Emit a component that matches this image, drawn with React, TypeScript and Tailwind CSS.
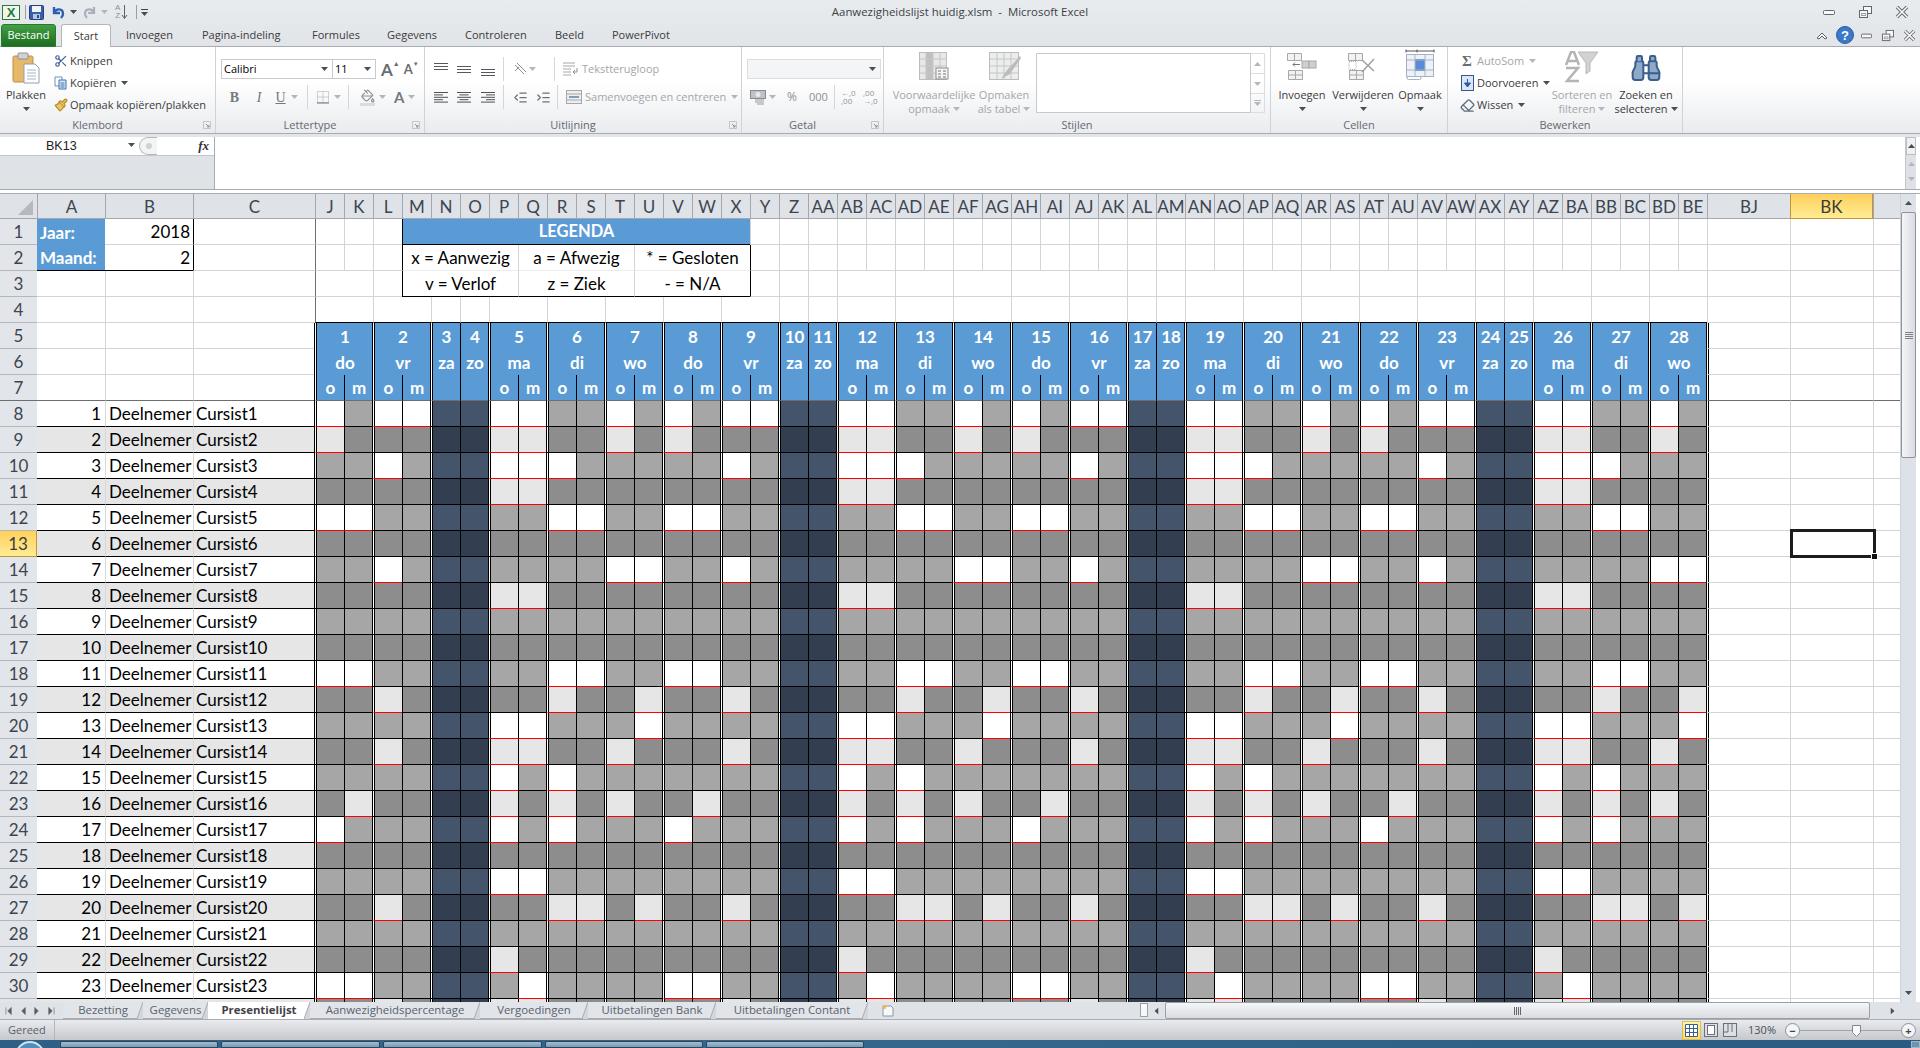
import React from "react";
import { Scissors, Paintbrush, IndentDecrease, IndentIncrease, PaintBucket, Binoculars, Eraser } from "lucide-react";

const cal = "font-['Lato',sans-serif]";

const LETTERS = (() => {
  const out: string[] = [];
  for (const c of "JKLMNOPQRSTUVWXYZ") out.push(c);
  for (const c of "ABCDEFGHIJKLMNOPQRSTUVWXYZ") out.push("A" + c);
  for (const c of "ABCDE") out.push("B" + c);
  return out;
})();

type Day = { n: number; wd: string; start: number; span: number; kind: number };
const DAYS: Day[] = (() => {
  const names = ["do", "vr", "za", "zo", "ma", "di", "wo"];
  const kinds = [0, 1, -1, -2, 2, 3, 4];
  const out: Day[] = [];
  let start = 0;
  for (let i = 0; i < 28; i++) {
    const k = i % 7;
    const span = kinds[k] < 0 ? 1 : 2;
    out.push({ n: i + 1, wd: names[k], start, span, kind: kinds[k] });
    start += span;
  }
  return out;
})();

const G = "gg gg gg gg gg";
const PATTERN = [
  "Lg LL LL gg Lg", "Lg gg LL gg Lg", "gg Lg LL Lg gg", "gg gg LL gg gg", "LL gg gg LL gg", G,
  "gg Lg gg gg LL", "gg gg LL gg gg", G, G, "LL gg gg LL gg", "gg Lg gg Lg gL",
  "gg gg LL gg gL", "gg Lg LL gg Lg", "gg gg Lg Lg gg", "gL gg Lg Lg Lg", "Lg gg Lg Lg gg", G,
  "gg gg LL gg gg", "gg Lg gg LL gL", G, "gg gg Lg gg gg", "LL gg gL gg gg", "gg Lg LL gg gg",
].map((r) => r.split(" "));

const DOUBLE = "-ml-px border-l-[3px] border-double border-l-black bg-clip-padding";
const GL = "border-b border-[#d4d4d4]";
const GLL = "border-l border-[#d4d4d4]";

function Caret({ g = false, className = "" }: { g?: boolean; className?: string }) {
  return (
    <svg width="7" height="4" viewBox="0 0 7 4" className={"shrink-0 " + className}>
      <path d="M0 0h7L3.5 4z" fill={g ? "#b4b6ba" : "#4a4d52"} />
    </svg>
  );
}

function Sep({ h = 24 }: { h?: number }) {
  return <div className="w-px bg-[#d4d6da] shrink-0" style={{ height: h }} />;
}

function LaunchIcon() {
  return (
    <svg width="8" height="8" viewBox="0 0 8 8" className="shrink-0">
      <path d="M0.5 0.5h7v7h-7z" fill="none" stroke="#c3c5c9" />
      <path d="M3 3l3 3M6 4v2H4" fill="none" stroke="#8b8e93" />
    </svg>
  );
}

function Lines({ kind }: { kind: "l" | "c" | "r" }) {
  const ws = [14, 9, 14, 9, 14];
  return (
    <svg width="14" height="13" viewBox="0 0 14 13" className="shrink-0">
      {ws.map((w, i) => (
        <rect key={i} x={kind === "l" ? 0 : kind === "c" ? (14 - w) / 2 : 14 - w} y={1 + i * 2.4} width={w} height="1" fill="#4f5258" />
      ))}
    </svg>
  );
}

function VLines({ pos }: { pos: "t" | "m" | "b" }) {
  const y0 = pos === "t" ? 0 : pos === "m" ? 3 : 6;
  return (
    <svg width="14" height="13" viewBox="0 0 14 13" className="shrink-0">
      {[0, 3, 6].map((d) => (
        <rect key={d} x="0" y={y0 + d} width="14" height="1" fill="#55585e" />
      ))}
    </svg>
  );
}

function GridIcon({ w = 30, h = 28, accent }: { w?: number; h?: number; accent?: string }) {
  return (
    <svg width={w} height={h} viewBox="0 0 30 28" className="shrink-0">
      <rect x="0.5" y="0.5" width="29" height="27" fill="#eceded" stroke="#bdbdbd" />
      {accent && <rect x="8" y="1" width="7" height="26" fill={accent} />}
      <path d="M8 1v26M15 1v26M22 1v26M1 7h28M1 14h28M1 21h28" stroke="#c6c6c6" />
    </svg>
  );
}

function Big({ icon, l1, l2, dis, caret = true, w }: { icon: React.ReactNode; l1: string; l2?: string; dis?: boolean; caret?: boolean; w: number }) {
  return (
    <div className={"flex flex-col items-center shrink-0 " + (dis ? "text-[#a4a6aa]" : "text-[#3b3b3b]")} style={{ width: w }}>
      <div className="h-[41px] pt-[5px] flex items-start justify-center">{icon}</div>
      <div className="h-[14px] leading-[14px] whitespace-nowrap">{l1}</div>
      {l2 ? (
        <div className="h-[14px] leading-[14px] whitespace-nowrap flex items-center gap-[3px]">
          {l2}
          {caret && <Caret g={dis} />}
        </div>
      ) : (
        caret && (
          <div className="h-[13px] flex items-center">
            <Caret g={dis} />
          </div>
        )
      )}
    </div>
  );
}

function Group({ w, label, launch, children }: { w: number; label: string; launch?: boolean; children: React.ReactNode }) {
  return (
    <div className="h-full border-r border-[#d0d2d6] flex flex-col shrink-0" style={{ width: w }}>
      <div className="h-[70px] flex">{children}</div>
      <div className={"h-[16px] relative flex items-center justify-center text-[#66696f] " + (launch ? "pr-[20px]" : "")}>
        {label}
        {launch && (
          <span className="absolute right-[4px] top-[4px]">
            <LaunchIcon />
          </span>
        )}
      </div>
    </div>
  );
}

function SmallRow({ icon, text, dis, caret, tw = 14 }: { icon: React.ReactNode; text: string; dis?: boolean; caret?: boolean; tw?: number }) {
  return (
    <div className={"h-[22px] flex items-center " + (dis ? "text-[#a4a6aa]" : "text-[#3b3b3b]")}>
      <span className="flex items-center justify-center shrink-0" style={{ width: tw + 5 }}>
        {icon}
      </span>
      <span className="whitespace-nowrap">{text}</span>
      {caret && <Caret g={dis} className="ml-[5px]" />}
    </div>
  );
}

function Ribbon() {
  return (
    <div className="h-[87px] shrink-0 flex border-b border-[#a9abb0] bg-gradient-to-b from-white from-40% to-[#e9ebee]">
      <Group w={216} label="Klembord" launch>
        <div className="w-[52px] shrink-0">
          <Big
            w={52}
            l1="Plakken"
            icon={
              <svg width="28" height="32" viewBox="0 0 28 32">
                <rect x="1" y="4" width="20" height="26" rx="1.5" fill="#e7b869" stroke="#b98d48" />
                <rect x="6" y="1" width="10" height="6" rx="1" fill="#cfd2d6" stroke="#8e9094" />
                <path d="M12 12h11l4 4v15H12z" fill="#fff" stroke="#8e9fb5" />
                <path d="M15 18h9M15 21h9M15 24h9M15 27h9" stroke="#a7b3c3" />
              </svg>
            }
          />
        </div>
        <div className="pt-[3px] -ml-px">
          <SmallRow icon={<Scissors size={14} color="#3c5f95" />} text="Knippen" />
          <SmallRow
            tw={14}
            caret
            icon={
              <svg width="14" height="14" viewBox="0 0 14 14">
                <path d="M1 1h7v9H1z" fill="#fff" stroke="#6f8fb8" />
                <path d="M5 4h7v9H5z" fill="#dbe7f6" stroke="#3f6fae" />
                <path d="M6.5 7h4M6.5 9h4M6.5 11h4" stroke="#3f6fae" />
              </svg>
            }
            text="Kopiëren"
          />
          <SmallRow icon={<Paintbrush size={14} color="#b98a2e" fill="#e8c560" />} text="Opmaak kopiëren/plakken" />
        </div>
      </Group>

      <Group w={209} label="Lettertype" launch>
        <div className="pl-[5px] pt-[12px]">
          <div className="flex items-center h-[20px]">
            <div className="w-[112px] h-[20px] border border-[#c8cacd] bg-white flex items-center justify-between pl-[2px] pr-[4px] text-black">
              Calibri
              <Caret />
            </div>
            <div className="w-[43px] h-[20px] border border-l-0 border-[#c8cacd] bg-white flex items-center justify-between pl-[2px] pr-[4px] text-black">
              11
              <Caret />
            </div>
            <span className={cal + " ml-[5px] text-[17px] font-bold text-[#6a6d72] leading-none"}>A</span>
            <span className="text-[7px] text-[#6a6d72] mb-[10px]">▲</span>
            <span className={cal + " ml-[4px] text-[13px] font-bold text-[#6a6d72] leading-none"}>A</span>
            <span className="text-[6px] text-[#6a6d72] mb-[10px]">▼</span>
          </div>
          <div className="flex items-center h-[20px] mt-[8px] text-[#75787d]">
            <span className="w-[27px] text-center font-['Liberation_Serif',serif] font-bold text-[14px]">B</span>
            <span className="w-[22px] text-center font-['Liberation_Serif',serif] italic text-[14px]">I</span>
            <span className="w-[21px] text-center font-['Liberation_Serif',serif] underline text-[14px]">U</span>
            <Caret g className="mr-[9px]" />
            <Sep />
            <span className="ml-[8px] mr-[4px]">
              <svg width="14" height="14" viewBox="0 0 14 14">
                <path d="M1.5 1.5h11v11h-11zM7 1.5v11M1.5 7h11" fill="none" stroke="#a7a9ad" strokeDasharray="1 1" />
                <path d="M1 13h12" stroke="#70737a" />
              </svg>
            </span>
            <Caret g className="mr-[7px]" />
            <Sep />
            <span className="ml-[11px] mr-[4px] flex flex-col items-center">
              <PaintBucket size={14} color="#8c8f94" />
              <span className="w-[15px] h-[3px] bg-[#dcdcdc]" />
            </span>
            <Caret g className="mr-[8px]" />
            <span className={cal + " font-bold text-[15px] mr-[4px]"}>A</span>
            <Caret g />
          </div>
        </div>
      </Group>

      <Group w={317} label="Uitlijning" launch>
        <div className="pl-[9px] pt-[12px] text-[#a4a6aa]">
          <div className="h-[20px] flex items-center">
            <span className="w-[23px]"><VLines pos="t" /></span>
            <span className="w-[24px]"><VLines pos="m" /></span>
            <span className="w-[22px]"><VLines pos="b" /></span>
            <Sep />
            <span className="ml-[9px] w-[14px] text-[#9ea0a4]">
              <svg width="14" height="14" viewBox="0 0 14 14">
                <path d="M2 3l9 9M4 1l9 9M6 5l-4 4" stroke="#8d9095" fill="none" />
              </svg>
            </span>
            <Caret g className="ml-[2px] mr-[18px]" />
            <Sep />
            <span className="ml-[8px] w-[18px]">
              <svg width="16" height="14" viewBox="0 0 16 14">
                <path d="M0 1h12M0 4h12M0 7h8M0 10h8M0 13h8" stroke="#a6a8ac" />
                <path d="M11 10h3V6M12 8l-2 2 2 2" stroke="#8d9095" fill="none" />
              </svg>
            </span>
            <span className="ml-[1px] whitespace-nowrap">Tekstterugloop</span>
          </div>
          <div className="h-[20px] mt-[8px] flex items-center">
            <span className="w-[23px]"><Lines kind="l" /></span>
            <span className="w-[24px]"><Lines kind="c" /></span>
            <span className="w-[22px]"><Lines kind="r" /></span>
            <Sep />
            <span className="ml-[9px] w-[23px]"><IndentDecrease size={15} color="#6e7176" /></span>
            <span className="w-[21px]"><IndentIncrease size={15} color="#6e7176" /></span>
            <Sep />
            <span className="ml-[8px] w-[18px]">
              <svg width="16" height="14" viewBox="0 0 16 14">
                <rect x="0.5" y="0.5" width="15" height="13" fill="#eee" stroke="#a6a8ac" />
                <path d="M0 4h16M0 10h16" stroke="#a6a8ac" />
                <path d="M3 7h10" stroke="#5f7fa8" strokeWidth="1.5" />
              </svg>
            </span>
            <span className="ml-[1px] whitespace-nowrap">Samenvoegen en centreren</span>
            <Caret g className="ml-[5px]" />
          </div>
        </div>
      </Group>

      <Group w={142} label="Getal" launch>
        <div className="pl-[5px] pt-[12px] text-[#8f9196]">
          <div className="w-[134px] h-[20px] border border-[#dcdde0] bg-[#f4f5f6] flex items-center justify-end pr-[4px]">
            <Caret />
          </div>
          <div className="h-[20px] mt-[8px] flex items-center">
            <span className="w-[19px] ml-[3px]">
              <svg width="16" height="16" viewBox="0 0 16 16">
                <rect x="0.5" y="1.5" width="15" height="8" fill="#bfc1c4" stroke="#888b90" />
                <circle cx="8" cy="5.5" r="2.5" fill="#e8e9ea" />
                <path d="M5 11h9M5 13h9M7 15h7" stroke="#97999d" />
              </svg>
            </span>
            <Caret g className="mr-[11px]" />
            <span className="w-[22px] text-[12px]">%</span>
            <span className="w-[25px] text-[11px]">000</span>
            <Sep />
            <span className="ml-[6px] w-[22px] text-[8px] leading-[8px] whitespace-pre">{"←,0\n,00"}</span>
            <span className="text-[8px] leading-[8px] whitespace-pre">{",00\n→,0"}</span>
          </div>
        </div>
      </Group>

      <Group w={387} label="Stijlen">
        <div className="w-[14px] shrink-0" />
        <Big
          dis
          w={72}
          l1="Voorwaardelijke"
          l2="opmaak"
          icon={
            <svg width="30" height="28" viewBox="0 0 30 28">
              <rect x="0.5" y="0.5" width="27" height="27" fill="#e8e8e8" stroke="#bdbdbd" />
              <rect x="7" y="1" width="7" height="26" fill="#c0c0c0" />
              <path d="M7 1v26M14 1v26M21 1v26M1 7h27M1 14h27M1 21h27" stroke="#c6c6c6" />
              <rect x="17" y="16" width="12" height="11" fill="#f5f5f5" stroke="#8d8d8d" />
              <path d="M19 19h3M19 22h3M19 25h3M24 19h3M24 22h3M24 25h3" stroke="#777" />
            </svg>
          }
        />
        <div className="w-[1px]" />
        <Big
          dis
          w={66}
          l1="Opmaken"
          l2="als tabel"
          icon={
            <span className="relative block">
              <GridIcon />
              <svg width="24" height="26" viewBox="0 0 24 26" className="absolute right-[-3px] bottom-0">
                <path d="M22 2L9 16l-6 9 9-5L23 4z" fill="#bcbcbc" />
              </svg>
            </span>
          }
        />
        <div className="pt-[6px] ml-[-1px] flex">
          <div className="w-[215px] h-[60px] bg-white border border-[#c8cacd]" />
          <div className="w-[14px] h-[60px] flex flex-col border border-l-0 border-[#dcdde0]">
            <div className="h-[20px] border-b border-[#dcdde0] flex items-center justify-center">
              <Caret g className="rotate-180" />
            </div>
            <div className="h-[20px] border-b border-[#dcdde0] flex items-center justify-center">
              <Caret g />
            </div>
            <div className="h-[18px] flex flex-col items-center justify-center gap-[1px]">
              <span className="w-[7px] h-px bg-[#b4b6ba]" />
              <Caret g />
            </div>
          </div>
        </div>
      </Group>

      <Group w={177} label="Cellen">
        <div className="w-[7px] shrink-0" />
        <Big
          w={48}
          l1="Invoegen"
          icon={
            <svg width="30" height="28" viewBox="0 0 30 28">
              <path d="M0.5 1.5h14v7h-14zM7.5 1.5v7M1.5 18.5h14v9h-14zM8.5 18.5v9M1.5 23h14" fill="#f2f2f2" stroke="#a8a8a8" />
              <rect x="15" y="9" width="7" height="7" fill="#cfcfcf" stroke="#a8a8a8" />
              <rect x="22" y="9" width="7" height="7" fill="#cfcfcf" stroke="#a8a8a8" />
              <path d="M13 12.5H6m2-2l-2 2 2 2" stroke="#777" fill="none" />
            </svg>
          }
        />
        <div className="w-[5px]" />
        <Big
          w={64}
          l1="Verwijderen"
          icon={
            <svg width="30" height="28" viewBox="0 0 30 28">
              <path d="M0.5 1.5h14v7h-14zM7.5 1.5v7M1.5 18.5h14v9h-14zM8.5 18.5v9M1.5 23h14" fill="#f2f2f2" stroke="#a8a8a8" />
              <path d="M1 9.5h7v8H1z" fill="none" stroke="#a8a8a8" strokeDasharray="1 1" />
              <path d="M14 8l12 11M26 7L14 20" stroke="#a0a0a0" strokeWidth="1.5" />
            </svg>
          }
        />
        <div className="w-[3px]" />
        <Big
          w={44}
          l1="Opmaak"
          icon={
            <svg width="30" height="32" viewBox="0 0 30 32" className="-mt-[3px]">
              <path d="M1 2h28M1 0.5v3M29 0.5v3M12 0.5v3" stroke="#555" />
              <rect x="1.5" y="5.5" width="27" height="22" fill="#eef2f8" stroke="#a6b2c4" />
              <rect x="10" y="10" width="10" height="12" fill="#5b8bd8" />
              <path d="M10 6v21M20 6v21M2 11h26M2 21h26" stroke="#a6b2c4" />
              <rect x="2" y="27.5" width="14" height="3" rx="1.5" fill="none" stroke="#a6b2c4" />
            </svg>
          }
        />
      </Group>

      <Group w={235} label="Bewerken">
        <div className="pt-[3px] pl-[9px] w-[103px] shrink-0">
          <SmallRow dis caret tw={15} icon={<span className="font-['Liberation_Serif',serif] font-bold text-[15px] text-[#6a6d72] leading-none">Σ</span>} text="AutoSom" />
          <SmallRow
            caret
            tw={15}
            icon={
              <svg width="13" height="16" viewBox="0 0 13 16">
                <rect x="0.5" y="0.5" width="12" height="15" fill="#d9e6f7" stroke="#36588f" />
                <path d="M6.5 4v7M3.5 8l3 4 3-4z" stroke="#2a5ab0" fill="#2a5ab0" />
              </svg>
            }
            text="Doorvoeren"
          />
          <SmallRow caret tw={15} icon={<Eraser size={15} color="#5f6b7c" />} text="Wissen" />
        </div>
        <Big
          dis
          w={62}
          l1="Sorteren en"
          l2="filteren"
          icon={
            <svg width="36" height="32" viewBox="0 0 36 32" className="-mt-px">
              <path d="M14 1h20l-8 11v8l-4 3V12z" fill="#d2d2d2" stroke="#b9b9b9" />
              <path d="M2 14L7 1h3l5 13M4 10h9M2 17h12L3 30h12" fill="none" stroke="#b4b4b4" strokeWidth="2.5" />
            </svg>
          }
        />
        <Big
          w={66}
          l1="Zoeken en"
          l2="selecteren"
          icon={<Binoculars size={32} color="#3b5e8c" fill="#8fa9c9" strokeWidth={1.5} />}
        />
      </Group>
      <div className="flex-1" />
    </div>
  );
}

const TABS: [string, number][] = [
  ["Invoegen", 76],
  ["Pagina-indeling", 110],
  ["Formules", 75],
  ["Gegevens", 78],
  ["Controleren", 90],
  ["Beeld", 57],
  ["PowerPivot", 85],
];

function Title() {
  return (
    <div className="h-[24px] shrink-0 flex items-center relative">
      <div className="w-[18px] h-[15px] ml-[2px] border border-[#2b7a3a] bg-[#f2f5ee] flex items-center justify-center font-bold text-[#1f7a33] text-[13px] leading-none font-['Liberation_Sans',sans-serif]">X</div>
      <div className="w-px h-[14px] bg-[#9a9da2] ml-[5px]" />
      <svg width="15" height="15" viewBox="0 0 15 15" className="ml-[3px]">
        <rect x="0.5" y="0.5" width="14" height="14" rx="1" fill="#3a5fa8" stroke="#23407c" />
        <rect x="3" y="1" width="9" height="6" fill="#f1f4f8" />
        <rect x="4" y="9" width="7" height="5" fill="#b4c5de" />
        <rect x="8" y="10" width="2" height="3" fill="#2b4a86" />
      </svg>
      <svg width="14" height="15" viewBox="0 0 14 15" className="ml-[7px]">
        <path d="M3 2v6h6M3 8c2-5 9-5 9 1 0 2-1 3-2 4" fill="none" stroke="#2d5fb0" strokeWidth="2.4" />
      </svg>
      <Caret className="ml-[5px]" />
      <svg width="13" height="15" viewBox="0 0 13 15" className="ml-[6px]">
        <path d="M11 2v6H5M11 8C9 3 2 3 2 9c0 2 1 3 2 4" fill="none" stroke="#a9b0ba" strokeWidth="2.2" />
      </svg>
      <Caret g className="ml-[5px]" />
      <div className="ml-[7px] flex items-center">
        <div className="text-[8px] leading-[8px] text-[#8d9096] font-['Liberation_Sans',sans-serif] flex flex-col items-center">
          <span>A</span>
          <span>Z</span>
        </div>
        <svg width="7" height="16" viewBox="0 0 7 16" className="ml-px">
          <path d="M3.5 1v13M1 11l2.5 3.5L6 11" stroke="#5c6068" fill="none" />
        </svg>
      </div>
      <div className="w-px h-[14px] bg-[#9a9da2] ml-[8px]" />
      <div className="ml-[4px] flex flex-col items-center gap-[2px]">
        <span className="w-[7px] h-px bg-[#444]" />
        <Caret />
      </div>
      <div className="absolute left-0 right-0 top-0 h-full flex items-center justify-center text-[#3b3f46] pointer-events-none text-[11.4px]">
        Aanwezigheidslijst huidig.xlsm&nbsp; -&nbsp; Microsoft Excel
      </div>
      <div className="ml-auto flex items-center pr-[11px]">
        <WinBtn size={14} gap={23} />
      </div>
    </div>
  );
}

function WinBtn({ size, gap }: { size: number; gap: number }) {
  return (
    <div className="flex items-center" style={{ gap }}>
      <svg width={size - 2} height={size} viewBox="0 0 12 14">
        <rect x="0.5" y="5.5" width="11" height="4" rx="1" fill="#f8f8f8" stroke="#62666d" />
      </svg>
      <svg width={size} height={size} viewBox="0 0 14 14">
        <rect x="5.5" y="1.5" width="8" height="7" fill="#f8f8f8" stroke="#62666d" />
        <rect x="1.5" y="5.5" width="8" height="7" fill="#f8f8f8" stroke="#62666d" />
        <rect x="3.5" y="8.5" width="4" height="2" fill="none" stroke="#9ba0a7" />
      </svg>
      <svg width={size} height={size} viewBox="0 0 14 14">
        <path d="M2 2l10 10M12 2L2 12" stroke="#62666d" strokeWidth="3.4" />
        <path d="M2 2l10 10M12 2L2 12" stroke="#f8f8f8" strokeWidth="1.6" />
      </svg>
    </div>
  );
}

function Tabs() {
  return (
    <div className="h-[23px] shrink-0 flex items-end relative border-b border-[#a9abb0]">
      <div className="ml-px w-[55px] h-[23px] -mb-px rounded-t-[3px] bg-gradient-to-b from-[#42a044] to-[#1c6e20] border border-[#277a2b] text-white flex items-center justify-center">
        Bestand
      </div>
      <div className="ml-[5px] w-[50px] h-[23px] -mb-px bg-white border border-b-0 border-[#b4b6ba] rounded-t-[3px] flex items-center justify-center text-[#3b3b3b]">
        Start
      </div>
      {TABS.map(([t, w], i) => (
        <div key={t} className="h-[22px] flex items-center text-[#3b3b3b] whitespace-nowrap" style={{ width: w, marginLeft: i === 0 ? 15 : 0 }}>
          {t}
        </div>
      ))}
      <div className="ml-auto mr-[4px] h-[22px] flex items-center">
        <svg width="14" height="12" viewBox="0 0 14 12" className="mr-[7px]">
          <path d="M2 9l5-5 5 5-2 1-3-3-3 3z" fill="#fff" stroke="#5b5e64" />
        </svg>
        <svg width="18" height="18" viewBox="0 0 18 18">
          <circle cx="9" cy="9" r="8.5" fill="#3c78c9" stroke="#2a5da6" />
          <text x="9" y="13.5" textAnchor="middle" fontSize="13" fontWeight="700" fill="#fff" fontFamily="Liberation Sans">?</text>
        </svg>
        <div className="ml-[7px]">
          <WinBtn size={13} gap={9} />
        </div>
      </div>
    </div>
  );
}

function FormulaBar() {
  return (
    <div className="h-[52px] shrink-0 flex bg-white">
      <div className="w-[215px] shrink-0 flex flex-col border-r border-[#a9abb0]">
        <div className="h-[18px] flex items-center bg-white">
          <div className="w-[139px] flex items-center pl-[46px] relative font-['Liberation_Sans',sans-serif] text-[#222] text-[12.5px]">
            BK13
            <Caret className="absolute right-[4px] top-[6px]" />
          </div>
          <div className="w-[18px] h-[18px] rounded-l-full border border-r-0 border-[#b4b6ba] flex items-center justify-center bg-[#f3f4f6]">
            <span className="w-[6px] h-[6px] rounded-full bg-[#cfd1d5]" />
          </div>
          <span className="ml-auto mr-[5px] font-['Liberation_Serif',serif] italic font-bold text-[13px] text-[#333]">fx</span>
        </div>
        <div className="flex-1 bg-[#dfe2e6] border-t border-[#c4c6ca]" />
      </div>
      <div className="flex-1" />
      <div className="w-[11px] shrink-0 ml-auto flex flex-col items-center bg-[#dee1e6] border-l border-[#c4c6ca] mr-[4px]">
        <div className="h-[18px] w-full bg-[#eef0f2] border border-[#bcbfc4] flex items-center justify-center">
          <Caret className="rotate-180" />
        </div>
        <div className="h-[17px] flex items-center"><Caret g className="rotate-180" /></div>
        <div className="h-[14px] flex items-center"><Caret g /></div>
      </div>
    </div>
  );
}

function Header({ children, sel }: { children?: React.ReactNode; sel?: boolean }) {
  return (
    <div
      className={
        "flex items-center justify-center text-[17px] leading-none " +
        cal +
        (sel
          ? " bg-gradient-to-b from-[#ffd05a] to-[#ffec93] border-x border-b border-[#c2953a] text-[#3c3c3c]"
          : " bg-[#dfe2e7] border-l border-b border-[#a4a8ae] text-[#3e4550]")
      }
    >
      {children}
    </div>
  );
}

function RowHead({ n, last7, sel }: { n: number; last7?: boolean; sel?: boolean }) {
  return (
    <div
      className={
        "flex items-center justify-center text-[17px] leading-none " +
        cal +
        (sel
          ? " bg-gradient-to-b from-[#ffd05a] to-[#ffec93] border-b border-r border-[#c2953a] text-[#3c3c3c]"
          : " bg-[#e2e5e9] border-b border-[#b4b7bc] text-[#3e4550]") +
        (last7 ? " !border-b-[#6e6e6e]" : "")
      }
    >
      {n === 31 ? null : n}
    </div>
  );
}

function Trail({ row, dark }: { row: number; dark?: boolean }) {
  const b = dark ? "border-b border-b-[#6e6e6e]" : GL;
  const kids = [48, 49, 50].map((c) => {
    const firstDbl = row >= 5 && c === 48;
    return (
      <div key={c} className={(firstDbl ? DOUBLE + " " : GLL + " ") + b + (row === 13 && c === 49 ? " relative" : "")}>
        {row === 13 && c === 49 && (
          <div className="absolute left-[-1px] top-[-2px] w-[86px] h-[29px] border-[3px] border-[#1c1c1c] z-10">
            <span className="absolute right-[-5px] bottom-[-5px] w-[7px] h-[7px] bg-[#111] border border-white" />
          </div>
        )}
      </div>
    );
  });
  return <>{kids}</>;
}

function Top() {
  const out: React.ReactNode[] = [];
  out.push(
    <div key="corner" className="bg-[#dfe2e7] border-b border-[#a4a8ae] flex items-end justify-end pr-[4px] pb-[3px]">
      <svg width="15" height="15" viewBox="0 0 15 15">
        <path d="M15 0v15H0z" fill="#b5b8bd" />
      </svg>
    </div>,
  );
  ["A", "B"].forEach((l) => out.push(<Header key={l}>{l}</Header>));
  out.push(<Header key="C">C</Header>);
  LETTERS.forEach((l, i) => out.push(<Header key={"h" + i}>{l}</Header>));
  out.push(<Header key="BJ">BJ</Header>);
  out.push(<Header key="BK" sel>BK</Header>);
  out.push(<Header key="BL" />);

  const lg = "bg-white border-b border-[#d4d4d4]";
  const gridCell = (k: string, i: number, extra = "") => (
    <div key={k} className={GL + " " + (i === 0 ? "border-l border-l-[#6e6e6e]" : GLL) + " " + extra} />
  );

  out.push(<RowHead key="r1" n={1} />);
  out.push(<div key="a1" className={cal + " text-[17px] font-bold text-white bg-[#5b9bd5] pl-[3px] flex items-center leading-none"}>Jaar:</div>);
  out.push(<div key="b1" className={cal + " text-[17px] text-black flex items-center justify-end pr-[3px] leading-none " + lg}>2018</div>);
  out.push(<div key="c1" className={GL + " border-l border-l-black"} />);
  for (let i = 0; i < 3; i++) out.push(gridCell("t1" + i, i));
  out.push(<div key="lg1" className={"col-span-12 bg-[#5b9bd5] border-l border-b border-black text-white font-bold text-[16.5px] leading-none flex items-center justify-center " + cal}>LEGENDA</div>);
  for (let i = 15; i < 48; i++) out.push(gridCell("t1" + i, i));
  out.push(<Trail key="tr1" row={1} />);

  out.push(<RowHead key="r2" n={2} />);
  out.push(<div key="a2" className={cal + " text-[17px] font-bold text-white bg-[#5b9bd5] pl-[3px] flex items-center leading-none border-b border-black"}>Maand:</div>);
  out.push(<div key="b2" className={cal + " text-[17px] text-black flex items-center justify-end pr-[3px] leading-none border-b border-black"}>2</div>);
  out.push(<div key="c2" className={GL + " border-l border-l-black"} />);
  for (let i = 0; i < 3; i++) out.push(gridCell("t2" + i, i));
  const legendCell = (k: string, t: string, first: boolean, last: boolean) => (
    <div
      key={k}
      className={
        "col-span-4 flex items-center justify-center text-[17px] leading-none text-black whitespace-nowrap " +
        cal +
        (first ? " border-l border-l-black" : " border-l border-l-[#d4d4d4]") +
        (last ? " border-b border-b-black" : " border-b border-b-[#ececec]")
      }
    >
      {t}
    </div>
  );
  out.push(legendCell("l21", "x = Aanwezig", true, false));
  out.push(legendCell("l22", "a = Afwezig", false, false));
  out.push(legendCell("l23", "* = Gesloten", false, false));
  for (let i = 15; i < 48; i++) out.push(gridCell("t2" + i, i, i === 15 ? "!border-l-black" : ""));
  out.push(<Trail key="tr2" row={2} />);

  out.push(<RowHead key="r3" n={3} />);
  out.push(<div key="a3" className={GL} />);
  out.push(<div key="b3" className={GL + " " + GLL} />);
  out.push(<div key="c3" className={GL + " " + GLL} />);
  out.push(<div key="t30" className={"col-span-2 border-b border-[#d4d4d4] border-l border-l-[#6e6e6e]"} />);
  out.push(<div key="t31" className={GL + " " + GLL} />);
  out.push(legendCell("l31", "v = Verlof", true, true));
  out.push(legendCell("l32", "z = Ziek", false, true));
  out.push(legendCell("l33", "- = N/A", false, true));
  out.push(<div key="t3y" className={GL + " border-l border-l-black"} />);
  DAYS.filter((d) => d.start >= 16).forEach((d) =>
    out.push(<div key={"t3d" + d.n} className={GL + " " + GLL + (d.span === 2 ? " col-span-2" : "")} />),
  );
  out.push(<Trail key="tr3" row={3} />);

  out.push(<RowHead key="r4" n={4} />);
  out.push(<div key="a4" className={GL} />);
  out.push(<div key="b4" className={GL + " " + GLL} />);
  out.push(<div key="c4" className={GL + " " + GLL} />);
  DAYS.forEach((d) =>
    out.push(
      <div
        key={"t4" + d.n}
        className={
          "border-b border-b-black " +
          (d.start === 0 ? "border-l border-l-[#6e6e6e]" : GLL) +
          (d.span === 2 ? " col-span-2" : "")
        }
      />,
    ),
  );
  out.push(<Trail key="tr4" row={4} />);

  const blue = "bg-[#5b9bd5] text-white font-bold leading-none flex items-center justify-center " + cal;
  ([5, 6] as const).forEach((r) => {
    out.push(<RowHead key={"r" + r} n={r} />);
    out.push(<div key={"a" + r} className={GL} />);
    out.push(<div key={"b" + r} className={GL + " " + GLL} />);
    out.push(<div key={"c" + r} className={GL + " " + GLL} />);
    DAYS.forEach((d) =>
      out.push(
        <div
          key={"d" + r + d.n}
          className={blue + " text-[17px] " + (d.kind === -2 ? "border-l border-l-black" : DOUBLE) + (d.span === 2 ? " col-span-2" : "")}
        >
          {r === 5 ? d.n : d.wd}
        </div>,
      ),
    );
    out.push(<Trail key={"tr" + r} row={r} />);
  });

  out.push(<RowHead key="r7" n={7} last7 />);
  ["a", "b", "c"].forEach((c, i) =>
    out.push(<div key={c + "7"} className={"border-b border-b-[#6e6e6e] " + (i ? GLL : "")} />),
  );
  DAYS.forEach((d) => {
    if (d.span === 1) {
      out.push(<div key={"d7" + d.n} className={blue + " border-b border-b-[#6e6e6e] " + (d.kind === -2 ? "border-l border-l-black" : DOUBLE)} />);
    } else {
      out.push(<div key={"d7o" + d.n} className={blue + " text-[17px] border-b border-b-[#6e6e6e] " + DOUBLE}>o</div>);
      out.push(<div key={"d7m" + d.n} className={blue + " text-[17px] border-b border-b-[#6e6e6e] border-l border-l-black"}>m</div>);
    }
  });
  out.push(<Trail key="tr7" row={7} dark />);
  return <>{out}</>;
}

function Body() {
  return (
    <>
      {PATTERN.map((p, idx) => {
        const row = idx + 8;
        const odd = idx % 2 === 0;
        const partial = row === 31;
        const nameBg = odd ? "bg-white" : "bg-[#e6e6e6]";
        const txt = cal + " text-[17px] leading-none text-black flex items-center whitespace-nowrap border-b border-b-black " + nameBg;
        const cells: React.ReactNode[] = [];
        DAYS.forEach((d) => {
          if (d.kind < 0) {
            cells.push(
              <div
                key={d.n}
                className={
                  (odd ? "bg-[#44546a] " : "bg-[#333f50] ") +
                  "border-b border-b-black " +
                  (d.kind === -2 ? "border-l border-l-black" : DOUBLE)
                }
              />,
            );
          } else {
            const s = p[d.kind];
            [0, 1].forEach((j) => {
              const light = s[j] === "L";
              const bg = light ? (odd ? "bg-white" : "bg-[#e6e6e6]") : odd ? "bg-[#a6a6a6]" : "bg-[#8d8d8d]";
              cells.push(
                <div
                  key={d.n + "-" + j}
                  className={
                    bg +
                    " border-b " +
                    (light ? "border-b-[#ff0000] " : "border-b-black ") +
                    (j === 0 ? DOUBLE : "border-l border-l-black")
                  }
                />,
              );
            });
          }
        });
        return (
          <React.Fragment key={row}>
            <RowHead n={row} sel={row === 13} />
            <div className={txt + " justify-end pr-[4px]"}>{partial ? null : idx + 1}</div>
            <div className={txt + " pl-[3px] border-l border-l-[#d8d8d8]"}>{partial ? null : "Deelnemer"}</div>
            <div className={txt + " pl-[2px] border-l border-l-[#d8d8d8]"}>{partial ? null : "Cursist" + (idx + 1)}</div>
            {cells}
            <Trail row={row} />
          </React.Fragment>
        );
      })}
    </>
  );
}

function VScroll() {
  return (
    <div className="w-[16px] shrink-0 bg-[#dde1e8] flex flex-col items-center border-l border-[#cfd3d9] mr-[4px]">
      <div className="h-[18px] flex items-center justify-center">
        <Caret className="rotate-180" />
      </div>
      <div className="w-[15px] h-[246px] rounded-[2px] border border-[#8f949c] bg-gradient-to-r from-[#f4f5f7] to-[#d9dce2] flex flex-col items-center justify-center gap-[1px]">
        <span className="w-[8px] h-px bg-[#7e8289]" />
        <span className="w-[8px] h-px bg-[#7e8289]" />
        <span className="w-[8px] h-px bg-[#7e8289]" />
        <span className="w-[8px] h-px bg-[#7e8289]" />
      </div>
      <div className="mt-auto h-[18px] flex items-center justify-center">
        <Caret />
      </div>
    </div>
  );
}

const SHEETS: [string, number, boolean][] = [
  ["Bezetting", 80, false],
  ["Gegevens", 65, false],
  ["Presentielijst", 102, true],
  ["Aanwezigheidspercentage", 170, false],
  ["Vergoedingen", 108, false],
  ["Uitbetalingen Bank", 128, false],
  ["Uitbetalingen Contant", 152, false],
];

function SheetTabs() {
  return (
    <div className="h-[17px] shrink-0 flex items-stretch bg-[#dfe2e7] text-[11.4px]">
      <div className="w-[60px] shrink-0 flex items-center justify-around px-[3px] text-[#555]">
        {["M1 1v8M7 1L3 5l4 4z", "M7 1L3 5l4 4z", "M3 1l4 4-4 4z", "M3 1l4 4-4 4zM9 1v8"].map((d, i) => (
          <svg key={i} width="9" height="10" viewBox="0 0 10 10">
            <path d={d} fill="#5a5d63" stroke="#5a5d63" strokeWidth="0.6" />
          </svg>
        ))}
      </div>
      <div className="w-[3px] shrink-0" />
      {SHEETS.map(([t, w, active]) => (
        <div
          key={t}
          className={
            "shrink-0 flex items-center justify-center whitespace-nowrap relative border-b border-[#a9adb3] " +
            (active ? "bg-white font-bold text-[#3f4247] border-b-white" : "bg-[#e1e4e8] text-[#5b616b]")
          }
          style={{ width: w }}
        >
          {t}
          <svg width="6" height="17" viewBox="0 0 6 17" className="absolute right-0 top-0">
            <path d="M0 17L6 0V17z" fill="#d3d6db" />
            <path d="M0 17L6 0" stroke="#a9adb3" />
          </svg>
        </div>
      ))}
      <div className="w-[40px] shrink-0 flex items-center justify-center">
        <svg width="14" height="13" viewBox="0 0 14 13">
          <path d="M2 2h8l2 2v8H2z" fill="#f7f8fa" stroke="#8b98ab" />
          <circle cx="3.5" cy="3" r="2" fill="#f0b94e" />
        </svg>
      </div>
      <div className="w-[232px] shrink-0" />
      <div className="w-[8px] h-[14px] mt-px bg-[#f7f8fa] border border-[#9aa0a8] shrink-0" />
      <div className="w-[17px] shrink-0 flex items-center justify-center">
        <Caret className="rotate-90" />
      </div>
      <div className="w-[705px] shrink-0 bg-gradient-to-b from-[#f5f6f8] to-[#d9dce1] border border-[#9aa0a8] rounded-[2px] flex items-center justify-center gap-px">
        <span className="w-px h-[8px] bg-[#666]" />
        <span className="w-px h-[8px] bg-[#666]" />
        <span className="w-px h-[8px] bg-[#666]" />
        <span className="w-px h-[8px] bg-[#666]" />
      </div>
      <div className="w-[44px] shrink-0 flex items-center justify-center">
        <Caret className="-rotate-90" />
      </div>
    </div>
  );
}

function StatusBar() {
  return (
    <div className="h-[21px] shrink-0 flex items-center bg-gradient-to-b from-[#e9ebee] to-[#c5c8cd] border-t border-[#a9adb3] text-[#5b616b]">
      <div className="w-[55px] h-full border-r border-[#b4b7bc] pl-[8px] flex items-center">Gereed</div>
      <div className="ml-auto flex items-center pr-[4px]">
        <div className="w-[19px] h-[19px] bg-gradient-to-b from-[#fff3a8] to-[#ffdb60] border border-[#dcbd52] flex items-center justify-center">
          <svg width="13" height="13" viewBox="0 0 13 13">
            <path d="M.5.5h12v12H.5zM4.5.5v12M8.5.5v12M.5 4.5h12M.5 8.5h12" fill="#fff" stroke="#3a5f96" />
          </svg>
        </div>
        <svg width="14" height="14" viewBox="0 0 14 14" className="ml-[3px]">
          <rect x="0.5" y="0.5" width="13" height="13" fill="#dcdfe3" stroke="#6b7078" />
          <rect x="3.5" y="2.5" width="7" height="9" fill="#fff" stroke="#6b7078" />
        </svg>
        <svg width="14" height="14" viewBox="0 0 14 14" className="ml-[5px]">
          <rect x="0.5" y="0.5" width="13" height="13" fill="#dcdfe3" stroke="#6b7078" />
          <path d="M5 1v8H1M9 1v8" stroke="#6b7078" fill="none" />
        </svg>
        <span className="ml-[11px] text-[#4a4e55]">130%</span>
        <span className="ml-[9px] w-[15px] h-[15px] rounded-full bg-[#f4f5f7] border border-[#8b9098] flex items-center justify-center font-bold text-[#444] leading-none">−</span>
        <div className="w-[101px] h-[9px] relative flex items-center">
          <div className="w-full h-px bg-[#9ea2a9]" />
          <svg width="9" height="12" viewBox="0 0 9 12" className="absolute left-[52px] top-[-1px]">
            <path d="M.5.5h8v7l-4 4-4-4z" fill="#f8f9fa" stroke="#80858c" />
          </svg>
        </div>
        <span className="w-[15px] h-[15px] rounded-full bg-[#f4f5f7] border border-[#8b9098] flex items-center justify-center font-bold text-[#444] leading-none">+</span>
      </div>
    </div>
  );
}

function Taskbar() {
  const bs = [158, 159, 159, 158, 158];
  return (
    <div className="h-[8px] shrink-0 bg-gradient-to-r from-[#2f5f85] via-[#35678d] to-[#2b5b80] flex items-end overflow-hidden">
      <div className="w-[60px] h-full flex items-start justify-center pt-[1px]">
        <span className="w-[30px] h-[30px] rounded-full border-2 border-[#cfe2ee] bg-[#4f8dbb] block" />
      </div>
      {bs.map((w, i) => (
        <div key={i} className="h-[7px] mr-[3px] rounded-t-[2px] bg-gradient-to-b from-[#a7bccb] to-[#7a9ab2] border border-[#26475f]" style={{ width: w }} />
      ))}
      <div className="ml-auto w-[9px] h-[7px] bg-[#6f93ad] border border-[#9db8ca]" />
    </div>
  );
}

export default function App() {
  return (
    <div className="w-[1920px] h-[1048px] flex flex-col overflow-hidden bg-[#e3e6e9] font-['Open_Sans',sans-serif] text-[11px]">
      <div className="bg-gradient-to-b from-[#e9ecee] to-[#e1e4e8] shrink-0">
        <Title />
        <Tabs />
      </div>
      <Ribbon />
      <div className="h-[3px] shrink-0 bg-[#e3e6e9]" />
      <FormulaBar />
      <div className="h-[5px] shrink-0 bg-white border-y border-[#a9abb0]" />
      <div className="h-[808px] shrink-0 flex bg-white">
        <div className="w-[1900px] shrink-0 overflow-hidden">
          <div className="grid grid-cols-[37px_68px_88px_122px_repeat(48,29px)_83px_83px_1fr] grid-rows-[25px] auto-rows-[26px] bg-white">
            <Top />
            <Body />
          </div>
        </div>
        <VScroll />
      </div>
      <SheetTabs />
      <StatusBar />
      <Taskbar />
    </div>
  );
}
